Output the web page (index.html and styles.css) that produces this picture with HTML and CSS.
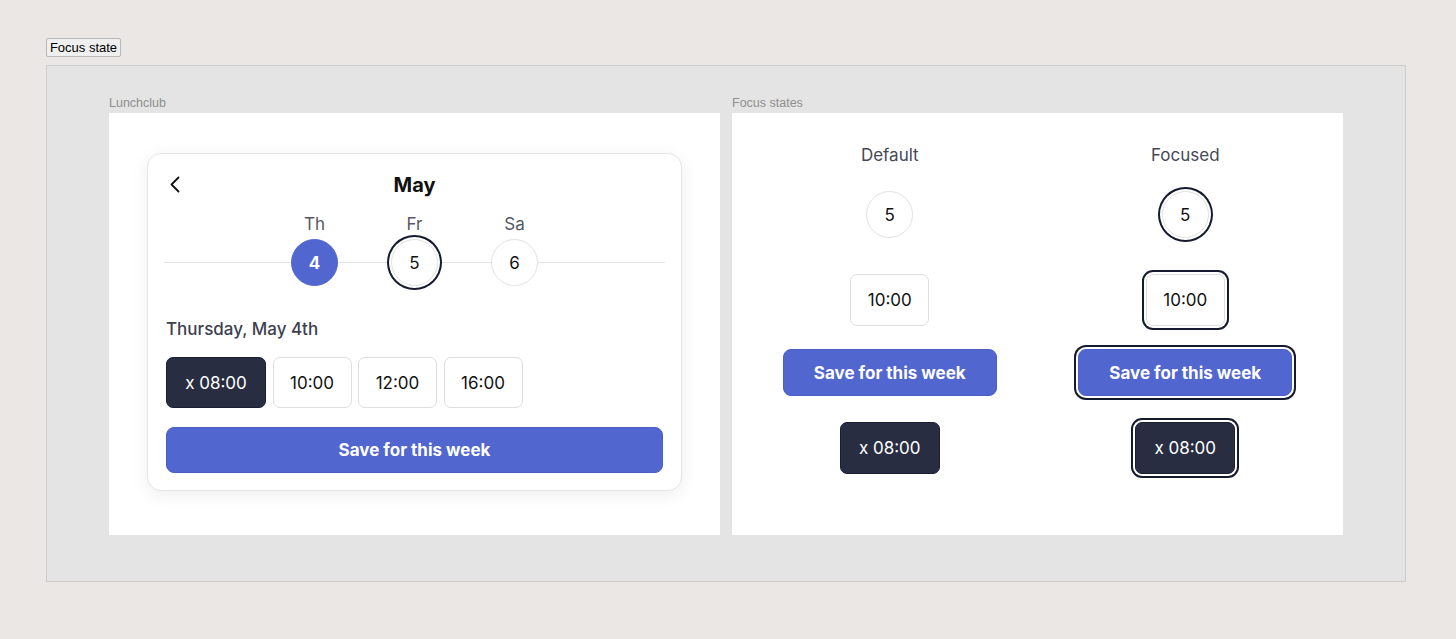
FILE: index.html
```html
<!DOCTYPE html>
<html lang="en">
<head>
<meta charset="utf-8">
<title>Focus state</title>
<link rel="stylesheet" href="styles.css">
</head>
<body>
<div class="page">
  <button class="tab">Focus state</button>
  <div class="frame">
    <section class="board">
      <div class="board-label">Lunchclub</div>
      <div class="panel panel-left">
        <div class="card">
          <div class="card-head">
            <svg class="back" width="12" height="17" viewBox="0 0 12 17" aria-hidden="true"><polyline points="9.5,1.5 2.5,8.5 9.5,15.5" fill="none" stroke="#111" stroke-width="1.8" stroke-linecap="round" stroke-linejoin="round"/></svg>
            <h1 class="month">May</h1>
          </div>
          <div class="day-names">
            <span class="day-name">Th</span>
            <span class="day-name">Fr</span>
            <span class="day-name">Sa</span>
          </div>
          <div class="day-circles">
            <span class="day-cell"><span class="circle circle-active">4</span></span>
            <span class="day-cell"><span class="circle focused">5</span></span>
            <span class="day-cell"><span class="circle">6</span></span>
          </div>
          <div class="date">Thursday, May 4th</div>
          <div class="times">
            <button class="time time-selected time-first">x 08:00</button>
            <button class="time">10:00</button>
            <button class="time">12:00</button>
            <button class="time">16:00</button>
          </div>
          <button class="save save-wide">Save for this week</button>
        </div>
      </div>
    </section>
    <section class="board">
      <div class="board-label">Focus states</div>
      <div class="panel panel-right">
        <div class="states">
          <div class="state-col">
            <div class="state-title">Default</div>
            <span class="circle circle-state">5</span>
            <button class="time time-state">10:00</button>
            <button class="save save-state">Save for this week</button>
            <button class="time time-selected time-state-dark">x 08:00</button>
          </div>
          <div class="state-col">
            <div class="state-title">Focused</div>
            <span class="circle circle-state focused">5</span>
            <button class="time time-state focused">10:00</button>
            <button class="save save-state focused">Save for this week</button>
            <button class="time time-selected time-state-dark focused">x 08:00</button>
          </div>
        </div>
      </div>
    </section>
  </div>
</div>
</body>
</html>
```

FILE: styles.css
```css
* { box-sizing: border-box; }

html, body {
  margin: 0;
  padding: 0;
  background: #ebe7e5;
}

body {
  font-family: Inter, "Noto Sans", sans-serif;
  color: #111;
}

.page {
  padding: 38px 0 0 46px;
}

.tab {
  display: block;
  height: 19px;
  width: 75px;
  padding: 0;
  margin: 0;
  font-family: "Liberation Sans", Arial, sans-serif;
  font-size: 13px;
  color: #000;
  background: #efefef;
  border: 1px solid #b9b9b9;
  border-radius: 2px;
}

.frame {
  margin-top: 8px;
  width: 1360px;
  height: 517px;
  background: #e4e4e4;
  border: 1px solid #cdcdcd;
  padding: 31px 0 0 62px;
  display: flex;
  gap: 12px;
}

.board {
  display: flex;
  flex-direction: column;
}

.board-label {
  height: 16px;
  font-family: "Liberation Sans", Arial, sans-serif;
  font-size: 12.5px;
  line-height: 13px;
  color: #8f8f8f;
}

.panel {
  width: 611px;
  height: 422px;
  background: #fff;
}

.panel-left {
  padding: 40px 0 0 38px;
}

.card {
  width: 535px;
  height: 338px;
  background: #fff;
  border: 1px solid #e6e6e6;
  border-radius: 14px;
  box-shadow: 0 4px 18px rgba(0, 0, 0, 0.07);
  padding: 20px 18px 0 18px;
  display: flex;
  flex-direction: column;
}

.card-head {
  height: 22px;
  display: flex;
  align-items: center;
  justify-content: center;
  position: relative;
}

.back {
  position: absolute;
  left: 3px;
  top: 2px;
}

.month {
  margin: 0;
  font-size: 20px;
  font-weight: 700;
  line-height: 22px;
  color: #111;
}

.day-names {
  margin-top: 18px;
  display: flex;
  justify-content: center;
}

.day-name {
  width: 100px;
  text-align: center;
  font-size: 17px;
  line-height: 20px;
  color: #555866;
}

.day-circles {
  margin: 5px -2px 0;
  display: flex;
  justify-content: center;
  background: linear-gradient(#e2e2e2, #e2e2e2) no-repeat center / 100% 1px;
}

.day-cell {
  width: 100px;
  display: flex;
  justify-content: center;
}

.circle {
  width: 47px;
  height: 47px;
  border-radius: 50%;
  border: 1px solid #e2e2e2;
  background: #fff;
  display: flex;
  align-items: center;
  justify-content: center;
  font-size: 17px;
  color: #111;
}

.circle-active {
  background: #5166cf;
  border-color: #5166cf;
  color: #fff;
  font-weight: 700;
}

.focused {
  box-shadow: 0 0 0 2px #fff, 0 0 0 4px #151a2d;
}

.date {
  margin-top: 31px;
  font-size: 17px;
  font-weight: 500;
  line-height: 24px;
  color: #3d4050;
}

.times {
  margin-top: 16px;
  display: flex;
  gap: 6.5px;
}

.time {
  width: 79px;
  height: 51px;
  padding: 0;
  background: #fff;
  border: 1px solid #dedede;
  border-radius: 7px;
  font-family: Inter, "Noto Sans", sans-serif;
  font-size: 17px;
  color: #111;
}

.time-first {
  width: 100px;
}

.time-selected {
  background: #282d42;
  border-color: #1b1f30;
  color: #fff;
}

.save {
  height: 46px;
  padding: 0;
  background: #5166cf;
  border: 1px solid #4a5ec6;
  border-radius: 8px;
  font-family: Inter, "Noto Sans", sans-serif;
  font-size: 17px;
  font-weight: 700;
  color: #fff;
}

.save-wide {
  margin-top: 19px;
  width: 100%;
}

.states {
  display: grid;
  grid-template-columns: 1fr 1fr;
  padding: 32px 10px 0;
}

.state-col {
  display: flex;
  flex-direction: column;
  align-items: center;
}

.state-title {
  font-size: 17px;
  line-height: 20px;
  color: #454857;
}

.circle-state {
  margin-top: 26px;
}

.time-state {
  margin-top: 36px;
  height: 52px;
}

.save-state {
  margin-top: 23px;
  width: 214px;
  height: 47px;
}

.time-state-dark {
  margin-top: 26px;
  width: 100px;
  height: 52px;
}
```
